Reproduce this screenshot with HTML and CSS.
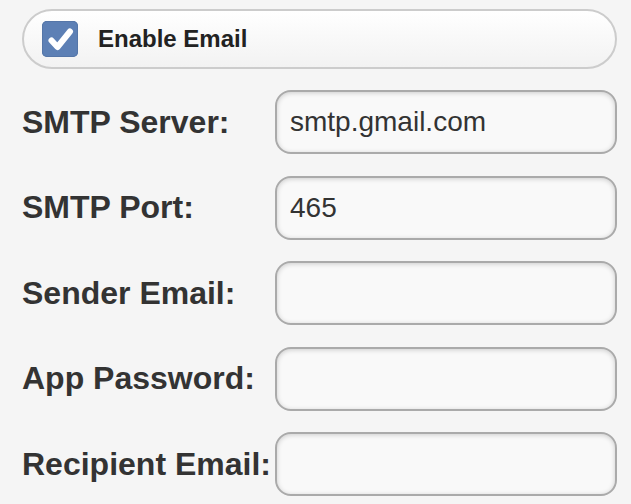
FILE: index.html
```html
<!DOCTYPE html>
<html>
<head>
<meta charset="utf-8">
<link rel="stylesheet" href="styles.css">
</head>
<body>
<div class="page">
  <label class="toggle">
    <span class="check">
      <svg width="36" height="36" viewBox="0 0 36 36"><path d="M9.5 19.5 L15.5 26 L28 10.5" fill="none" stroke="#fff" stroke-width="6" stroke-linecap="round" stroke-linejoin="round"/></svg>
    </span>
    <span class="toggle-text">Enable Email</span>
  </label>
  <div class="form">
    <span class="lbl">SMTP Server:</span>
    <div class="field">smtp.gmail.com</div>
    <span class="lbl">SMTP Port:</span>
    <div class="field">465</div>
    <span class="lbl">Sender Email:</span>
    <div class="field"></div>
    <span class="lbl">App Password:</span>
    <div class="field"></div>
    <span class="lbl">Recipient Email:</span>
    <div class="field"></div>
  </div>
</div>
</body>
</html>
```
FILE: styles.css
```css
html, body {
  margin: 0;
  background: #f5f5f5;
}
.page {
  padding: 9px 14px 0 22px;
  font-family: "Liberation Sans", Arial, sans-serif;
}
.toggle {
  box-sizing: border-box;
  display: flex;
  align-items: center;
  width: 595px;
  height: 60px;
  border: 2px solid #cccccc;
  border-radius: 30px;
  background: linear-gradient(#ffffff, #f2f2f2);
  padding-left: 18px;
}
.check {
  display: block;
  width: 36px;
  height: 36px;
  border-radius: 5px;
  background: #5d80b5;
  box-shadow: inset 0 0 0 1px #5576a8;
}
.check svg { display: block; }
.toggle-text {
  margin-left: 20px;
  font-size: 24px;
  font-weight: bold;
  color: #222;
}
.form {
  display: grid;
  grid-template-columns: 253px 342px;
  row-gap: 21.5px;
  margin-top: 21px;
  align-items: center;
}
.lbl {
  font-size: 32px;
  font-weight: bold;
  color: #333;
  white-space: nowrap;
}
.field {
  box-sizing: border-box;
  height: 64px;
  border: 2px solid #aaaaaa;
  border-radius: 16px;
  background: #f9f9f9;
  box-shadow: inset 0 1px 5px rgba(0,0,0,0.18);
  padding-left: 13px;
  display: flex;
  align-items: center;
  font-size: 28px;
  color: #333;
}
```
